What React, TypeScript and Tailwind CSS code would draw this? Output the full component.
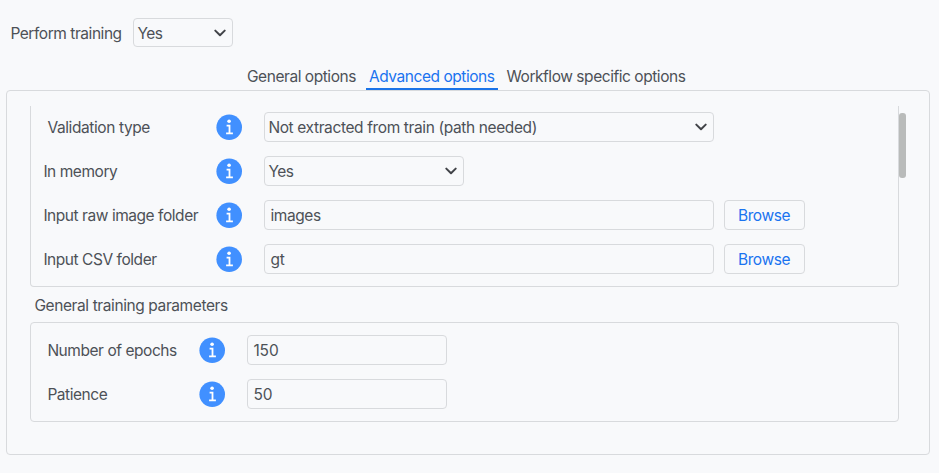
import React from "react";

type LabelProps = { text: string; className: string };

const Label = ({ text, className }: LabelProps) => (
  <div className={`shrink-0 whitespace-nowrap pt-[2px] ${className}`}>{text}</div>
);

const InfoIcon = () => (
  <svg className="size-[26px] shrink-0" viewBox="0 0 26 26" fill="none">
    <circle cx="13.2" cy="13.2" r="12.8" fill="#4190ff" />
    <circle cx="13.1" cy="7.2" r="1.8" fill="#fff" />
    <path d="M10.6 11.7h2.9v7.6M10.1 19.4h6.8" stroke="#fff" strokeWidth="1.8" />
  </svg>
);

const Chevron = () => (
  <svg className="h-2 w-3 shrink-0" viewBox="0 0 12 8" fill="none">
    <path d="M1.3 1.6 6 6.2l4.7-4.6" stroke="#414348" strokeWidth="2" strokeLinecap="round" strokeLinejoin="round" />
  </svg>
);

type FieldProps = { value: string; className: string };

const Select = ({ value, className }: FieldProps) => (
  <div className={`flex shrink-0 items-center justify-between rounded-[4px] border border-[#d8dadd] pl-[3.4px] pr-[6px] ${className}`}>
    <span className="whitespace-nowrap pt-[2px]">{value}</span>
    <Chevron />
  </div>
);

const Input = ({ value, className }: FieldProps) => (
  <div className={`flex h-[30px] shrink-0 items-center rounded-[4px] border border-[#d8dadd] pl-[5.4px] ${className}`}>
    <span className="whitespace-nowrap pt-[2px]">{value}</span>
  </div>
);

const Browse = () => (
  <button className="ml-[10px] flex h-[30px] w-[81px] items-center justify-center rounded-[4px] border border-[#d8dadd] pr-px pt-[2px] tracking-[-0.45px] text-[#1a73f0]">
    Browse
  </button>
);

export default function App() {
  return (
    <div className="flex h-[473px] w-[939px] flex-col overflow-hidden bg-[#f8f9fb] font-['Inter',sans-serif] text-[15.5px] leading-5 tracking-[-0.45px] text-[#4d5157]">
      <div className="flex h-[47px] items-end pl-[10px]">
        <div className="flex items-center">
          <Label text="Perform training" className="w-[123px] pl-[0.4px]" />
          <Select value="Yes" className="h-[29px] w-[100px] tracking-[-0.5px]" />
        </div>
      </div>

      <div className="mt-[17px] flex h-[26px]">
        <div className="w-[366px] whitespace-nowrap pl-[247px] pt-[3px]">General options</div>
        <div className="w-[132px] whitespace-nowrap border-b-2 border-[#1a73e8] pl-[3px] pt-[3px] text-[#1a73f0]">Advanced options</div>
        <div className="whitespace-nowrap pl-[8.5px] pt-[3px]">Workflow specific options</div>
      </div>

      <div className="ml-[6px] h-[365px] w-[924px] rounded-[4px] border border-[#d8dadd] pl-[23px] pt-[15px]">
        <div className="flex">
          <div className="flex h-[181px] w-[869px] flex-col gap-[14px] rounded-b-[4px] border border-t-0 border-[#d8dadd] pt-[6px]">
            <div className="flex h-[30px] items-center">
              <Label text="Validation type" className="w-[185px] pl-[16.4px] tracking-[-0.4px]" />
              <InfoIcon />
              <Select value="Not extracted from train (path needed)" className="ml-[22px] h-[30px] w-[450px] tracking-[-0.38px]" />
            </div>
            <div className="flex h-[30px] items-center">
              <Label text="In memory" className="w-[185px] pl-[12.4px]" />
              <InfoIcon />
              <Select value="Yes" className="ml-[22px] h-[30px] w-[200px] tracking-[-0.5px]" />
            </div>
            <div className="flex h-[30px] items-center">
              <Label text="Input raw image folder" className="w-[185px] pl-[12.4px]" />
              <InfoIcon />
              <Input value="images" className="ml-[22px] w-[450px] tracking-[-0.4px]" />
              <Browse />
            </div>
            <div className="flex h-[30px] items-center">
              <Label text="Input CSV folder" className="w-[185px] pl-[12.4px]" />
              <InfoIcon />
              <Input value="gt" className="ml-[22px] w-[450px] tracking-[-0.2px]" />
              <Browse />
            </div>
          </div>
          <div className="mt-[7px] h-[65px] w-[7px] rounded-[3px] bg-[#b9bbba]" />
        </div>

        <div className="flex h-[35px] items-center pl-[4.4px] pt-[2px] tracking-[-0.4px]">General training parameters</div>

        <div className="flex h-[100px] w-[869px] flex-col gap-[14px] rounded-[4px] border border-[#d8dadd] pt-[12px]">
          <div className="flex h-[30px] items-center">
            <Label text="Number of epochs" className="w-[168px] pl-[16.4px]" />
            <InfoIcon />
            <Input value="150" className="ml-[22px] w-[200px] tracking-[-0.1px]" />
          </div>
          <div className="flex h-[30px] items-center">
            <Label text="Patience" className="w-[168px] pl-[16.4px]" />
            <InfoIcon />
            <Input value="50" className="ml-[22px] w-[200px] tracking-[-0.1px]" />
          </div>
        </div>
      </div>
    </div>
  );
}
